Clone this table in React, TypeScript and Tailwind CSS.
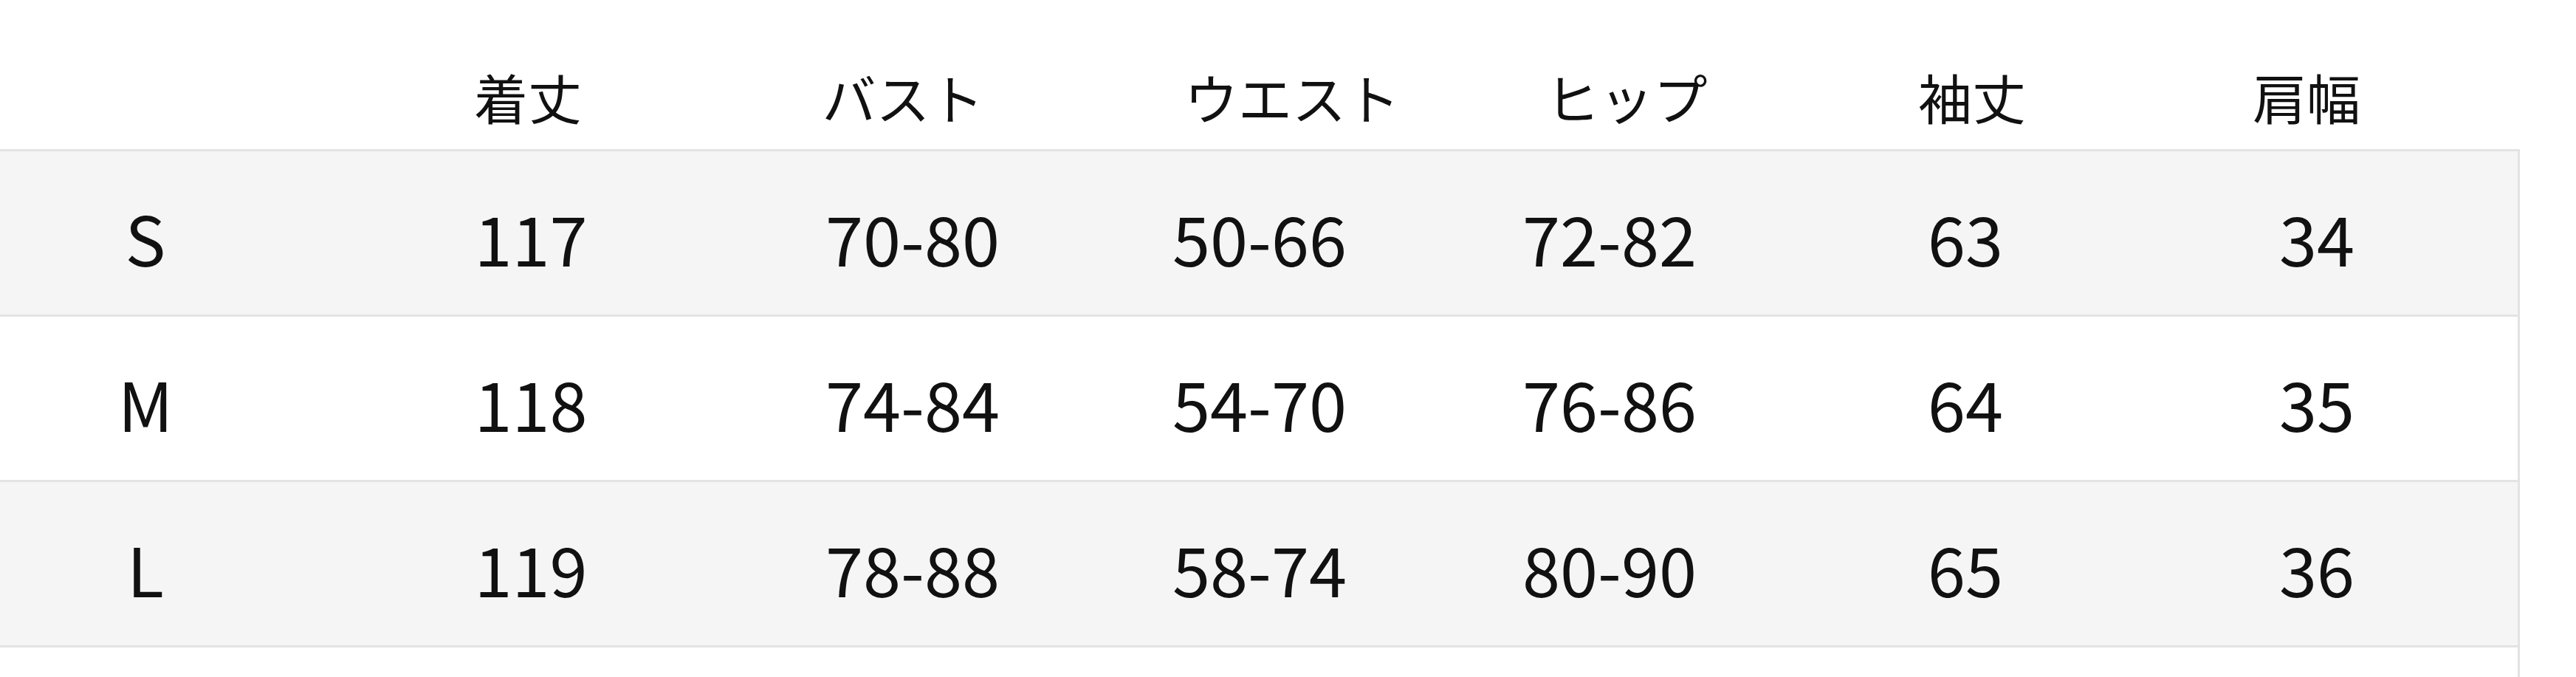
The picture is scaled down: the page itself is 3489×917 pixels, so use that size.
const headers = ["", "着丈", "バスト", "ウエスト", "ヒップ", "袖丈", "肩幅"]

const rows = [
  ["S", "117", "70-80", "50-66", "72-82", "63", "34"],
  ["M", "118", "74-84", "54-70", "76-86", "64", "35"],
  ["L", "119", "78-88", "58-74", "80-90", "65", "36"],
]

export default function App() {
  return (
    <div
      className="w-[3489px] h-[917px] overflow-hidden bg-white text-[#111]"
      style={{ fontFamily: '"Noto Sans CJK JP", "Noto Sans", sans-serif' }}
    >
      <div className="w-[3413px]">
        {/* header */}
        <div className="grid grid-cols-[394px_642px_374px_680px_226px_710px_196px] h-[202px] items-center text-[73px] leading-none">
          {headers.map((h, i) => (
            <div key={i} className="text-center pt-[58px]">
              {h}
            </div>
          ))}
        </div>

        {/* body */}
        {rows.map((r, ri) => (
          <div
            key={r[0]}
            className={`grid grid-cols-[394px_650px_384px_556px_392px_572px_380px] h-[224px] items-center border-t-[3px] border-r-[3px] border-[#e3e3e3] text-[92px] leading-none ${
              ri % 2 === 0 ? "bg-[#f5f5f5]" : "bg-white"
            }`}
          >
            {r.map((c, ci) => (
              <div key={ci} className="text-center pt-[10px]">
                {c}
              </div>
            ))}
          </div>
        ))}
        <div className="h-[200px] border-t-[3px] border-r-[3px] border-[#e3e3e3] bg-white" />
      </div>
    </div>
  )
}
